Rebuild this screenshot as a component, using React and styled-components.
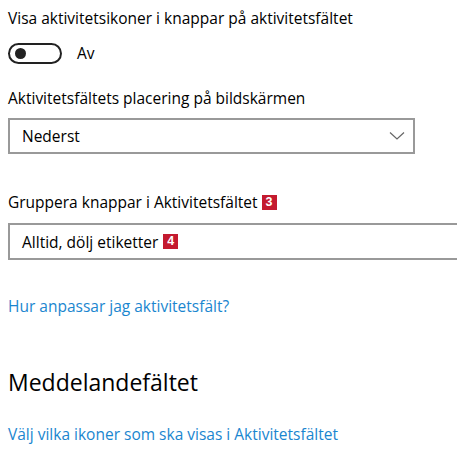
import React from 'react'
import styled, { createGlobalStyle } from 'styled-components'

const Global = createGlobalStyle`
  body {
    margin: 0;
    background: #fff;
    font-family: 'Open Sans', 'Noto Sans', sans-serif;
    color: #000;
  }
`

const Page = styled.div`
  width: 457px;
  height: 458px;
  overflow: hidden;
  padding: 7px 0 0 8px;
  box-sizing: border-box;
`

const Label = styled.div`
  font-size: 15.5px;
  line-height: 22px;
  display: flex;
  align-items: center;
  gap: 4px;
  margin-top: ${p => p.top || 0}px;
`

const ToggleRow = styled.div`
  display: flex;
  align-items: center;
  gap: 15px;
  margin-top: 13px;
  font-size: 15.5px;
`

const Toggle = styled.div`
  width: 54px;
  height: 21px;
  box-sizing: border-box;
  border: 2px solid #222;
  border-radius: 11px;
  display: flex;
  align-items: center;
  padding-left: 5px;

  &::before {
    content: '';
    width: 11px;
    height: 11px;
    border-radius: 50%;
    background: #222;
  }
`

const Select = styled.div`
  width: ${p => p.width}px;
  height: ${p => p.h}px;
  box-sizing: border-box;
  border: 2px solid #999;
  ${p => p.open && 'border-right: none;'}
  margin-top: ${p => p.top}px;
  display: flex;
  align-items: center;
  justify-content: space-between;
  padding: 0 8px 0 12px;
  font-size: 15.5px;
`

const Value = styled.span`
  display: flex;
  align-items: center;
  gap: 5px;
`

const Badge = styled.span`
  width: 15px;
  height: 15px;
  background: #c41a2f;
  color: #fff;
  font-family: 'Liberation Sans', Arial, sans-serif;
  font-weight: bold;
  font-size: 12.5px;
  line-height: 15px;
  text-align: center;
`

const Link = styled.div`
  color: #1a86cf;
  font-size: 15.5px;
  line-height: 22px;
  margin-top: ${p => p.top}px;
`

const Heading = styled.div`
  font-size: 23px;
  line-height: 30px;
  margin-top: 50px;
`

const Chevron = () => (
  <svg width="16" height="10" viewBox="0 0 16 10">
    <path d="M1 1.5 L8 8 L15 1.5" fill="none" stroke="#666" strokeWidth="1.2" />
  </svg>
)

export default function App () {
  return (
    <Page>
      <Global />
      <Label>Visa aktivitetsikoner i knappar på aktivitetsfältet</Label>
      <ToggleRow>
        <Toggle />
        <span>Av</span>
      </ToggleRow>
      <Label top={23}>Aktivitetsfältets placering på bildskärmen</Label>
      <Select width={407} h={36} top={9}>
        <span>Nederst</span>
        <Chevron />
      </Select>
      <Label top={37}>Gruppera knappar i Aktivitetsfältet <Badge>3</Badge></Label>
      <Select width={460} h={37} top={10} open>
        <Value>Alltid, dölj etiketter <Badge>4</Badge></Value>
      </Select>
      <Link top={35}>Hur anpassar jag aktivitetsfält?</Link>
      <Heading>Meddelandefältet</Heading>
      <Link top={26}>Välj vilka ikoner som ska visas i Aktivitetsfältet</Link>
    </Page>
  )
}
